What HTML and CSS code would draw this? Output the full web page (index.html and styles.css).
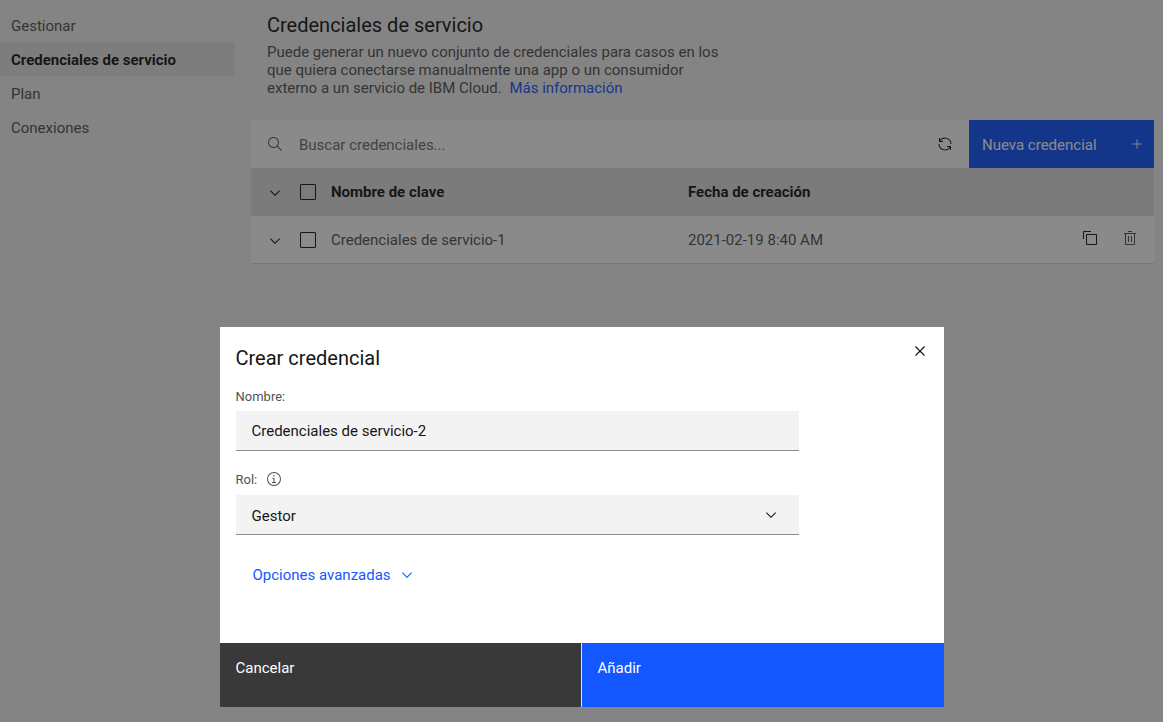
FILE: index.html
```html
<!DOCTYPE html>
<html lang="es">
<head>
<meta charset="utf-8">
<meta name="viewport" content="width=device-width, initial-scale=1">
<title>Credenciales de servicio</title>
<link rel="stylesheet" href="styles.css">
</head>
<body>
<svg class="sprite" aria-hidden="true">
  <symbol id="chevron" viewBox="0 0 16 16"><path d="M8 11L3 6 3.7 5.3 8 9.6 12.3 5.3 13 6z"/></symbol>
</svg>
<div class="page">
  <nav class="side-nav" aria-label="Servicio">
    <a class="side-link" href="#gestionar">Gestionar</a>
    <a class="side-link side-link-active" href="#credenciales" aria-current="page">Credenciales de servicio</a>
    <a class="side-link" href="#plan">Plan</a>
    <a class="side-link" href="#conexiones">Conexiones</a>
  </nav>
  <main class="content">
    <header class="intro">
      <h1 class="heading">Credenciales de servicio</h1>
      <p class="lead"><span>Puede generar un nuevo conjunto de credenciales para casos en los que quiera conectarse manualmente una app o un consumidor externo a un servicio de IBM Cloud.</span> <a class="more-link" href="#info">Más información</a></p>
    </header>
    <div class="toolbar">
      <label class="search">
        <svg class="icon" viewBox="0 0 16 16" aria-hidden="true"><path d="M15,14.3L10.7,10c1.9-2.3,1.6-5.8-0.7-7.7S4.2,0.7,2.3,3S0.7,8.8,3,10.7c2,1.7,5,1.7,7,0l4.3,4.3L15,14.3z M2,6.5C2,4,4,2,6.5,2S11,4,11,6.5S9,11,6.5,11S2,9,2,6.5z"/></svg>
        <input class="search-input" type="text" aria-label="Buscar credenciales" placeholder="Buscar credenciales...">
      </label>
      <button class="refresh" type="button" aria-label="Renovar">
        <svg class="icon" viewBox="0 0 32 32" aria-hidden="true"><path d="M12 10H6.78A11 11 0 0127 16h2A13 13 0 006 7.68V4H4v8h8zM20 22h5.22A11 11 0 015 16H3a13 13 0 0023 8.32V28h2V20H20z"/></svg>
      </button>
      <button class="new-button" type="button">
        <span class="new-label">Nueva credencial</span>
        <svg class="icon" viewBox="0 0 32 32" aria-hidden="true"><path d="M17 15V7H15V15H7V17H15V25H17V17H25V15z"/></svg>
      </button>
    </div>
    <table class="table">
      <thead>
        <tr>
          <th class="cell-expand"><button class="expand" type="button" aria-label="Expandir todo"><svg class="icon" aria-hidden="true"><use href="#chevron"/></svg></button></th>
          <th class="cell-check"><input class="check" type="checkbox" aria-label="Seleccionar todo"></th>
          <th class="cell-name">Nombre de clave</th>
          <th>Fecha de creación</th>
          <th class="cell-actions"></th>
        </tr>
      </thead>
      <tbody>
        <tr>
          <td class="cell-expand"><button class="expand" type="button" aria-label="Expandir fila"><svg class="icon" aria-hidden="true"><use href="#chevron"/></svg></button></td>
          <td class="cell-check"><input class="check" type="checkbox" aria-label="Seleccionar Credenciales de servicio-1"></td>
          <td class="cell-name">Credenciales de servicio-1</td>
          <td>2021-02-19 8:40 AM</td>
          <td class="cell-actions">
            <div class="actions">
              <button class="action action-copy" type="button" aria-label="Copiar"><svg class="icon" viewBox="0 0 32 32" aria-hidden="true"><path d="M28,10V28H10V10H28m0-2H10a2,2,0,0,0-2,2V28a2,2,0,0,0,2,2H28a2,2,0,0,0,2-2V10a2,2,0,0,0-2-2Z"/><path d="M4,18H2V4A2,2,0,0,1,4,2H18V4H4Z"/></svg></button>
              <button class="action" type="button" aria-label="Suprimir"><svg class="icon" viewBox="0 0 32 32" aria-hidden="true"><path d="M12 12H14V24H12zM18 12H20V24H18z"/><path d="M4 6V8H6V28a2 2 0 002 2H24a2 2 0 002-2V8h2V6zM8 28V8H24V28zM12 2H20V4H12z"/></svg></button>
            </div>
          </td>
        </tr>
      </tbody>
    </table>
  </main>
</div>
<div class="overlay">
  <form class="modal" role="dialog" aria-modal="true" aria-labelledby="modal-title">
    <header class="modal-header">
      <h2 class="heading" id="modal-title">Crear credencial</h2>
      <button class="close" type="button" aria-label="Cerrar"><svg class="icon-large" viewBox="0 0 32 32" aria-hidden="true"><path d="M24 9.4L22.6 8 16 14.6 9.4 8 8 9.4 14.6 16 8 22.6 9.4 24 16 17.4 22.6 24 24 22.6 17.4 16 24 9.4z"/></svg></button>
    </header>
    <div class="modal-body">
      <div class="field">
        <label class="field-label" for="name">Nombre:</label>
        <input class="field-control" id="name" type="text" value="Credenciales de servicio-2">
      </div>
      <div class="field">
        <div class="label-row">
          <label class="field-label" for="role">Rol:</label>
          <svg class="icon" viewBox="0 0 32 32" role="img" aria-label="Información"><path d="M17 22V14H13V16H15V22H12V24H20V22zM16 8a1.5 1.5 0 101.5 1.5A1.5 1.5 0 0016 8z"/><path d="M16,30A14,14,0,1,1,30,16,14,14,0,0,1,16,30ZM16,4A12,12,0,1,0,28,16,12,12,0,0,0,16,4Z"/></svg>
        </div>
        <div class="select-wrap">
          <select class="field-control" id="role"><option>Gestor</option></select>
          <svg class="icon select-arrow" aria-hidden="true"><use href="#chevron"/></svg>
        </div>
      </div>
      <button class="advanced" type="button">Opciones avanzadas <svg class="icon" aria-hidden="true"><use href="#chevron"/></svg></button>
    </div>
    <footer class="modal-footer">
      <button class="footer-button" type="button">Cancelar</button>
      <button class="footer-button footer-primary" type="submit">Añadir</button>
    </footer>
  </form>
</div>
</body>
</html>
```
FILE: styles.css
```css
* { box-sizing: border-box; }

body {
  margin: 0;
  background: #f3f3f3;
  color: #161616;
  font-family: Roboto, "Noto Sans", sans-serif;
  font-size: 15px;
  line-height: 18px;
}

button, input, select { font: inherit; color: inherit; }
button { padding: 0; border: 0; background: none; cursor: pointer; }
.sprite { display: none; }
.icon { width: 16px; height: 16px; flex: none; display: block; fill: currentColor; }
.icon-large { width: 20px; height: 20px; display: block; fill: currentColor; }
.heading { margin: 0; font-size: 20px; line-height: 26px; font-weight: 400; }

.page { display: flex; gap: 16px; min-height: 100vh; padding-right: 9px; }

.side-nav { flex: 0 0 235px; padding-top: 8px; }
.side-link {
  display: flex;
  align-items: center;
  height: 34px;
  padding: 2px 11px 0;
  color: #525252;
  text-decoration: none;
}
.side-link-active { background: #e5e5e5; color: #161616; font-weight: 700; }

.content { flex: 1; min-width: 0; padding-top: 12px; }
.intro { padding: 0 16px 23px; }
.lead { max-width: 464px; margin: 5px 0 0; color: #525252; }
.more-link { margin-left: 4px; color: #0f5aff; text-decoration: none; }

.toolbar { display: flex; height: 48px; background: #fff; }
.search { flex: 1; display: flex; align-items: center; gap: 16px; padding-left: 16px; color: #525252; }
.search-input { flex: 1; min-width: 0; height: 48px; padding: 2px 0 0; border: 0; background: none; outline: 0; }
.search-input::placeholder { color: #6f6f6f; opacity: 1; }
.refresh { display: grid; place-items: center; width: 48px; }
.new-button {
  display: flex;
  align-items: center;
  justify-content: space-between;
  width: 185px;
  padding: 0 9px 0 13px;
  background: #1257ff;
  color: #fff;
}
.new-label { padding-top: 2px; }

.table { width: 100%; border-collapse: separate; border-spacing: 0; table-layout: fixed; background: #fff; color: #525252; }
.table th, .table td { height: 48px; padding: 0; text-align: left; font-weight: 400; }
.table th { background: #e0e0e0; color: #161616; font-weight: 700; }
.table td { border-bottom: 1px solid #dcdcdc; }
.table .cell-expand { width: 48px; }
.table .cell-check { width: 32px; }
.cell-name { width: 357px; }
.cell-actions { width: 84px; }
.expand { display: grid; place-items: center; width: 48px; height: 47px; padding-top: 2px; color: #161616; }
.check { appearance: none; display: block; width: 16px; height: 16px; margin: 0 0 0 1px; border: 1px solid #161616; border-radius: 1px; }
.actions { display: flex; padding: 0 4px 3px 0; }
.action { display: grid; place-items: center; width: 40px; height: 40px; color: #525252; }
.action-copy { color: #161616; }

.overlay {
  position: fixed;
  inset: 0;
  display: flex;
  align-items: flex-end;
  justify-content: center;
  padding: 15px;
  background: rgba(22, 22, 22, 0.5);
}
.modal { width: 100%; max-width: 724px; background: #fff; }
.modal-header { display: flex; justify-content: space-between; padding-left: 16px; }
.modal-header .heading { padding-top: 18px; }
.close { display: grid; place-items: center; width: 48px; height: 48px; }
.modal-body { padding: 12px 145px 48px 16px; }
.field { margin-bottom: 20px; }
.field-label { display: block; padding-top: 2px; color: #525252; font-size: 13px; line-height: 16px; }
.field > .field-label { margin-bottom: 6px; }
.label-row { display: flex; align-items: center; gap: 9px; height: 16px; margin-bottom: 8px; color: #525252; }
.field-control {
  display: block;
  width: 100%;
  height: 40px;
  padding: 1px 16px 0;
  border: 0;
  border-bottom: 1px solid #8d8d8d;
  border-radius: 0;
  background: #f3f3f3;
  appearance: none;
  outline: 0;
}
select.field-control { padding-top: 2px; }
.select-wrap { display: grid; align-items: center; }
.select-wrap > * { grid-area: 1 / 1; }
.select-arrow { justify-self: end; margin-right: 20px; pointer-events: none; }
.advanced { display: flex; align-items: center; gap: 8px; height: 40px; margin-left: 17px; color: #1257ff; }
.modal-footer { display: grid; grid-template-columns: 1fr 1fr; }
.footer-button { height: 64px; padding: 16px; background: #393939; color: #fff; text-align: left; display: flex; align-items: flex-start; }
.footer-button:first-child { border-right: 1px solid #e0e0e0; }
.footer-primary { background: #1257ff; }
```
